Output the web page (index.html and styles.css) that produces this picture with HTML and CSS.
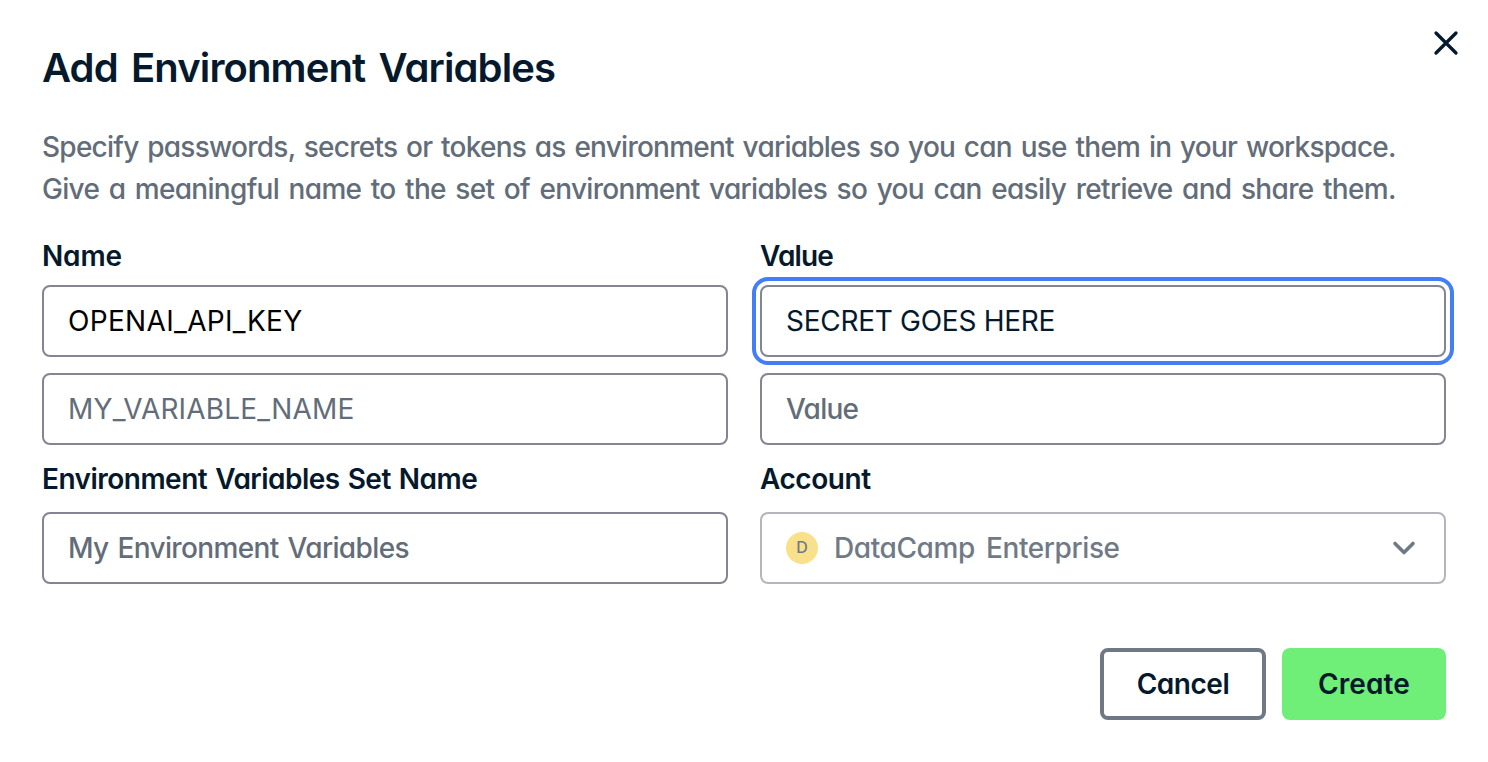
FILE: index.html
```html
<!DOCTYPE html>
<html lang="en">
<head>
<meta charset="utf-8">
<title>Add Environment Variables</title>
<link rel="stylesheet" href="styles.css">
</head>
<body>
<main class="dialog">
  <header class="header">
    <h1 class="title">Add Environment Variables</h1>
    <button class="close" aria-label="Close"><svg width="28" height="28" viewBox="0 0 28 28"><path d="M4 4 24 24M24 4 4 24"/></svg></button>
  </header>
  <div class="intro">
    <div class="line-a">Specify passwords, secrets or tokens as environment variables so you can use them in your workspace.</div>
    <div class="line-b">Give a meaningful name to the set of environment variables so you can easily retrieve and share them.</div>
  </div>
  <div class="grid">
    <div class="label l-name">Name</div>
    <div class="label l-value">Value</div>
    <div class="field typed f-key">OPENAI_API_KEY</div>
    <div class="field focused f-secret">SECRET GOES HERE</div>
    <div class="field second f-var">MY_VARIABLE_NAME</div>
    <div class="field second f-value">Value</div>
    <div class="label lower l-set">Environment Variables Set Name</div>
    <div class="label lower l-account">Account</div>
    <div class="field f-set">My Environment Variables</div>
    <div class="field select">
      <span class="avatar">D</span>
      <span class="f-account">DataCamp Enterprise</span>
      <svg class="chevron" width="24" height="16" viewBox="0 0 24 16"><path d="M3 3.500 12 12.500 21 3.500"/></svg>
    </div>
  </div>
  <footer class="actions">
    <button class="btn cancel">Cancel</button>
    <button class="btn create">Create</button>
  </footer>
</main>
</body>
</html>
```

FILE: styles.css
```css
* { box-sizing: border-box; }

body {
  margin: 0;
  background: #fff;
  color: #05192d;
  font-family: Inter, "Liberation Sans", sans-serif;
  font-size: 28px;
  font-weight: 500;
  font-feature-settings: "cv11";
}

.dialog { width: 1488px; height: 762px; padding: 44px 42px 0; }

.header { display: flex; justify-content: space-between; align-items: flex-start; height: 82px; }
.title { margin: 0; font-size: 40px; line-height: 48px; font-weight: 600; letter-spacing: -0.88px; word-spacing: 4px; }
.close { margin: -15px -14px 0 0; padding: 0; border: 0; background: none; height: 28px; line-height: 0; }
.close svg { fill: none; stroke: #05192d; stroke-width: 3.3; stroke-linecap: round; }

.intro { margin-bottom: 25px; color: #626d79; line-height: 42px; white-space: nowrap; word-spacing: 2px; }
.line-a { letter-spacing: -0.75px; }
.line-b { letter-spacing: -0.69px; word-spacing: 2.7px; }

.grid { display: grid; grid-template-columns: 686px 686px; column-gap: 32px; }

.label { height: 50px; line-height: 42px; font-weight: 600; }
.label.lower { height: 54px; margin-top: 13px; }
.l-name { letter-spacing: -0.15px; }
.l-value { letter-spacing: -0.85px; }
.l-set { letter-spacing: -0.52px; word-spacing: 1.5px; }
.l-account { letter-spacing: -0.45px; }

.field {
  height: 72px;
  display: flex;
  align-items: center;
  padding: 0 24px;
  border: 2px solid #848492;
  border-radius: 8px;
  color: #626d79;
}
.typed { color: #000; }
.focused { color: #05192d; outline: 4px solid #437ef7; outline-offset: 4px; }
.second { margin-top: 16px; }
.f-key { font-weight: 400; letter-spacing: 0.33px; }
.f-secret { font-weight: 400; letter-spacing: -0.28px; }
.f-var { font-weight: 400; letter-spacing: 0.17px; }
.f-value { letter-spacing: -0.75px; }
.f-set { letter-spacing: -0.63px; word-spacing: 2px; }
.f-account { letter-spacing: -0.4px; word-spacing: 4px; }

.select { border-color: #b5b5be; color: #707a86; }
.avatar {
  width: 32px;
  height: 32px;
  margin-right: 16px;
  border-radius: 50%;
  background: #f9e18b;
  font-size: 16px;
  line-height: 31px;
  text-align: center;
}
.chevron { margin-left: auto; margin-right: 4px; fill: none; stroke: #707a86; stroke-width: 3.6; stroke-linecap: round; stroke-linejoin: round; }

.actions { display: flex; justify-content: flex-end; gap: 16px; margin-top: 64px; }
.btn {
  height: 72px;
  padding: 0;
  border: 0;
  border-radius: 8px;
  font: inherit;
  font-feature-settings: inherit;
  font-weight: 600;
  color: #05192d;
}
.cancel { width: 166px; background: #fff; border: 4px solid #6f7885; letter-spacing: -0.45px; }
.create { width: 164px; background: #6fee78; letter-spacing: 0.1px; }
```
